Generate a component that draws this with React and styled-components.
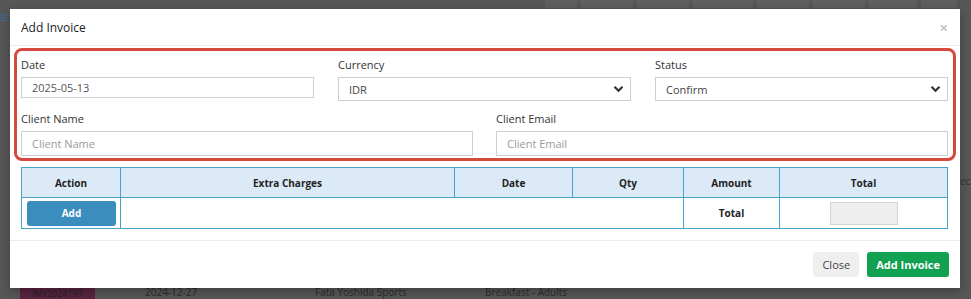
import React from "react";
import styled, { createGlobalStyle } from "styled-components";

const GlobalStyle = createGlobalStyle`
  html, body {
    margin: 0;
    padding: 0;
    background: #575757;
    font-family: "Open Sans", "Noto Sans", sans-serif;
  }
`;

function App() {
  return (
    <Page>
      <GlobalStyle />
      <Backdrop>
        <TopBar>
          <Burger>≡</Burger>
          <TopButtons>
            {[32, 52, 52, 60, 52, 52, 48, 36].map((w, i) => (
              <GhostButton key={i} style={{ width: w }} />
            ))}
          </TopButtons>
        </TopBar>
        <BackRow>
          <Badge>INV2024197</Badge>
          <BackCell>2024-12-27</BackCell>
          <BackCell>Fata Yoshida Sports</BackCell>
          <BackCell>Breakfast - Adults</BackCell>
        </BackRow>
      </Backdrop>

      <Modal>
        <ModalHeader>
          <Title>Add Invoice</Title>
          <CloseX>×</CloseX>
        </ModalHeader>
        <ModalBody>
          <Highlight>
            <Row3>
              <Field>
                <Label>Date</Label>
                <Input defaultValue="2025-05-13" $h={21} />
              </Field>
              <Field>
                <Label>Currency</Label>
                <Select>
                  IDR
                  <Chevron />
                </Select>
              </Field>
              <Field>
                <Label>Status</Label>
                <Select>
                  Confirm
                  <Chevron />
                </Select>
              </Field>
            </Row3>
            <Row2>
              <Field>
                <Label>Client Name</Label>
                <Input placeholder="Client Name" $h={25} />
              </Field>
              <Field>
                <Label>Client Email</Label>
                <Input placeholder="Client Email" $h={25} />
              </Field>
            </Row2>
          </Highlight>

          <Table>
            <colgroup>
              <col style={{ width: 99 }} />
              <col style={{ width: 334 }} />
              <col style={{ width: 118 }} />
              <col style={{ width: 111 }} />
              <col style={{ width: 96 }} />
              <col />
            </colgroup>
            <thead>
              <tr>
                <Th>Action</Th>
                <Th>Extra Charges</Th>
                <Th>Date</Th>
                <Th>Qty</Th>
                <Th>Amount</Th>
                <Th>Total</Th>
              </tr>
            </thead>
            <tbody>
              <tr>
                <Td>
                  <AddButton>Add</AddButton>
                </Td>
                <Td colSpan={3} />
                <Td $bold>Total</Td>
                <Td>
                  <TotalBox />
                </Td>
              </tr>
            </tbody>
          </Table>
        </ModalBody>
        <ModalFooter>
          <Button $variant="light">Close</Button>
          <Button $variant="green">Add Invoice</Button>
        </ModalFooter>
      </Modal>
      <SideText>ec</SideText>
    </Page>
  );
}

export default App;

const Page = styled.div`
  position: relative;
  width: 971px;
  height: 299px;
  overflow: hidden;
  background: #575757;
`;

const Backdrop = styled.div`
  height: 299px;
  display: flex;
  flex-direction: column;
  justify-content: space-between;
`;

const TopBar = styled.div`
  display: flex;
  justify-content: space-between;
  height: 10px;
`;

const Burger = styled.span`
  color: #3a6a9a;
  font-size: 16px;
  line-height: 10px;
  margin-top: 12px;
`;

const TopButtons = styled.div`
  display: flex;
  gap: 4px;
  margin-right: 14px;
`;

const GhostButton = styled.div`
  height: 8px;
  background: #5f5f5f;
  border-radius: 0 0 2px 2px;
`;

const BackRow = styled.div`
  display: flex;
  align-items: flex-end;
  gap: 50px;
  padding-left: 20px;
  height: 12px;
  font-size: 10px;
  color: #2b2b2b;
`;

const Badge = styled.div`
  width: 75px;
  height: 12px;
  background: #5a2440;
  color: #222;
  font-size: 9px;
  text-align: center;
`;

const BackCell = styled.div`
  width: 120px;
`;

const SideText = styled.div`
  position: absolute;
  left: 960px;
  top: 174px;
  font-size: 10px;
  color: #2e2e2e;
`;

const Modal = styled.div`
  position: absolute;
  top: 9px;
  left: 10px;
  width: 950px;
  height: 279px;
  background: #fff;
  display: flex;
  flex-direction: column;
  box-shadow: 0 3px 9px rgba(0, 0, 0, 0.3);
`;

const ModalHeader = styled.div`
  height: 36px;
  border-bottom: 1px solid #ececec;
  display: flex;
  align-items: center;
  justify-content: space-between;
  padding: 0 12px 0 11px;
`;

const Title = styled.div`
  font-size: 12px;
  color: #222;
`;

const CloseX = styled.div`
  font-size: 15px;
  font-weight: 700;
  color: #c4c4c4;
  line-height: 1;
`;

const ModalBody = styled.div`
  padding: 2px 4px 0 4px;
  height: 192px;
  border-bottom: 1px solid #ececec;
`;

const Highlight = styled.div`
  box-sizing: border-box;
  border: 3px solid #d6493f;
  border-radius: 8px;
  padding: 7px 5px 0 4px;
  height: 113px;
`;

const Row3 = styled.div`
  display: grid;
  grid-template-columns: 293px 293px 293px;
  column-gap: 24px;
`;

const Row2 = styled.div`
  display: grid;
  grid-template-columns: 452px 452px;
  column-gap: 23px;
  margin-top: 11px;
`;

const Field = styled.div`
  display: flex;
  flex-direction: column;
`;

const Label = styled.label`
  font-size: 11px;
  color: #333;
  line-height: 14px;
  margin-bottom: 5px;
`;

const Input = styled.input`
  box-sizing: border-box;
  height: ${(p) => p.$h}px;
  border: 1px solid #cfcfcf;
  padding: 0 10px;
  font-family: inherit;
  font-size: 11px;
  color: #555;
  outline: none;
  &::placeholder {
    color: #9a9a9a;
  }
`;

const Select = styled.div`
  box-sizing: border-box;
  height: 24px;
  border: 1px solid #cfcfcf;
  padding: 0 6px 0 10px;
  display: flex;
  align-items: center;
  justify-content: space-between;
  font-size: 11px;
  color: #444;
`;

const Chevron = () => (
  <svg width="11" height="8" viewBox="0 0 11 8">
    <path d="M1.5 1.8 L5.5 5.8 L9.5 1.8" fill="none" stroke="#333" strokeWidth="2.2" />
  </svg>
);

const Table = styled.table`
  margin: 6px 0 0 7px;
  width: 927px;
  border-collapse: collapse;
  table-layout: fixed;
  font-size: 10px;
`;

const Th = styled.th`
  height: 29px;
  padding: 0;
  background: #dceaf7;
  border: 1px solid #4aa3c7;
  font-weight: 700;
  color: #222;
  text-align: center;
`;

const Td = styled.td`
  height: 30px;
  padding: 0;
  border: 1px solid #4aa3c7;
  text-align: center;
  font-weight: ${(p) => (p.$bold ? 700 : 400)};
  color: #222;
`;

const AddButton = styled.button`
  display: block;
  margin: 0 auto 0 5px;
  width: 89px;
  height: 25px;
  border: none;
  border-radius: 3px;
  background: #3b8dbd;
  color: #fff;
  font-family: inherit;
  font-weight: 700;
  font-size: 10px;
`;

const TotalBox = styled.div`
  width: 66px;
  height: 21px;
  margin: 0 auto;
  background: #eee;
  border: 1px solid #d5d5d5;
`;

const ModalFooter = styled.div`
  flex: 1;
  display: flex;
  justify-content: flex-end;
  align-items: center;
  gap: 8px;
  padding: 0 11px 0 0;
`;

const Button = styled.button`
  height: 25px;
  border: none;
  border-radius: 3px;
  padding: 0 9px;
  font-family: inherit;
  font-size: 11px;
  font-weight: ${(p) => (p.$variant === "green" ? 700 : 400)};
  background: ${(p) => (p.$variant === "green" ? "#12a150" : "#efefef")};
  color: ${(p) => (p.$variant === "green" ? "#fff" : "#444")};
`;
